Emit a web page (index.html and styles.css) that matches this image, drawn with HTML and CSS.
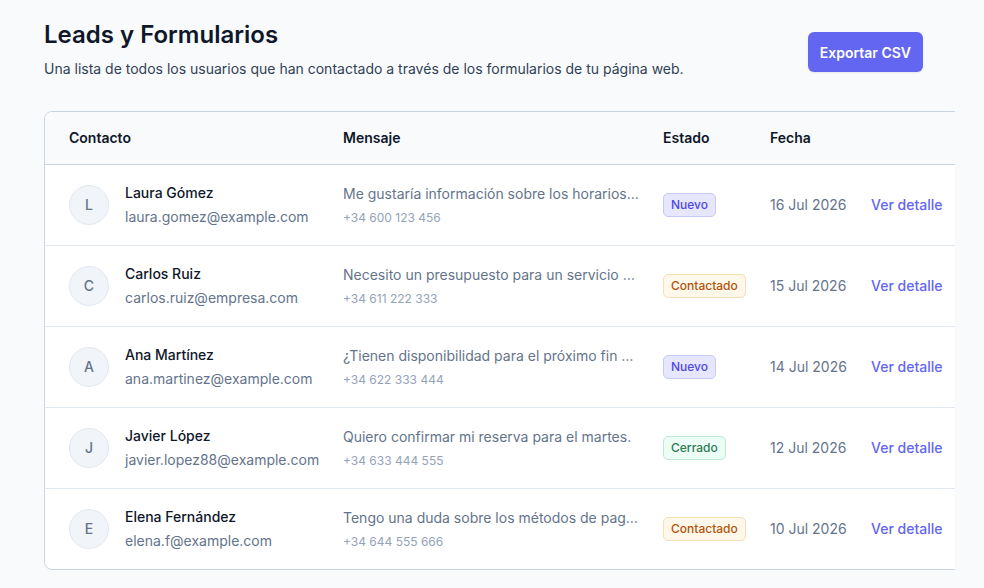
FILE: index.html
```html
<html lang="es">
  <head>
    <meta charset="UTF-8" />
    <meta name="viewport" content="width=device-width, initial-scale=1.0" />
    <title>Leads y Formularios</title>
    <link rel="stylesheet" href="styles.css">
  </head>
  <body>
    <div class="page">
      <div class="page-header">
        <div>
          <h1 class="page-title">Leads y Formularios</h1>
          <p class="page-subtitle">Una lista de todos los usuarios que han contactado a través de los formularios de tu página web.</p>
        </div>
        <button class="btn-primary">Exportar CSV</button>
      </div>

      <div class="table-scroll">
        <div class="table-card">
          <table class="leads-table">
            <colgroup>
              <col class="col-contact">
              <col class="col-message">
              <col class="col-status">
              <col class="col-date">
              <col class="col-action">
            </colgroup>
            <thead>
              <tr>
                <th>Contacto</th>
                <th>Mensaje</th>
                <th>Estado</th>
                <th>Fecha</th>
                <th></th>
              </tr>
            </thead>
            <tbody>
              <tr>
                <td>
                  <div class="contact">
                    <div class="avatar">L</div>
                    <div>
                      <div class="contact-name">Laura Gómez</div>
                      <div class="contact-email">laura.gomez@example.com</div>
                    </div>
                  </div>
                </td>
                <td>
                  <div class="message">Me gustaría información sobre los horarios...</div>
                  <div class="phone">+34 600 123 456</div>
                </td>
                <td><span class="badge badge-new">Nuevo</span></td>
                <td class="date">16 Jul 2026</td>
                <td class="action"><a href="#">Ver detalle</a></td>
              </tr>
              <tr>
                <td>
                  <div class="contact">
                    <div class="avatar">C</div>
                    <div>
                      <div class="contact-name">Carlos Ruiz</div>
                      <div class="contact-email">carlos.ruiz@empresa.com</div>
                    </div>
                  </div>
                </td>
                <td>
                  <div class="message">Necesito un presupuesto para un servicio de mantenimiento</div>
                  <div class="phone">+34 611 222 333</div>
                </td>
                <td><span class="badge badge-contacted">Contactado</span></td>
                <td class="date">15 Jul 2026</td>
                <td class="action"><a href="#">Ver detalle</a></td>
              </tr>
              <tr>
                <td>
                  <div class="contact">
                    <div class="avatar">A</div>
                    <div>
                      <div class="contact-name">Ana Martínez</div>
                      <div class="contact-email">ana.martinez@example.com</div>
                    </div>
                  </div>
                </td>
                <td>
                  <div class="message">¿Tienen disponibilidad para el próximo fin de semana?</div>
                  <div class="phone">+34 622 333 444</div>
                </td>
                <td><span class="badge badge-new">Nuevo</span></td>
                <td class="date">14 Jul 2026</td>
                <td class="action"><a href="#">Ver detalle</a></td>
              </tr>
              <tr>
                <td>
                  <div class="contact">
                    <div class="avatar">J</div>
                    <div>
                      <div class="contact-name">Javier López</div>
                      <div class="contact-email">javier.lopez88@example.com</div>
                    </div>
                  </div>
                </td>
                <td>
                  <div class="message">Quiero confirmar mi reserva para el martes.</div>
                  <div class="phone">+34 633 444 555</div>
                </td>
                <td><span class="badge badge-closed">Cerrado</span></td>
                <td class="date">12 Jul 2026</td>
                <td class="action"><a href="#">Ver detalle</a></td>
              </tr>
              <tr>
                <td>
                  <div class="contact">
                    <div class="avatar">E</div>
                    <div>
                      <div class="contact-name">Elena Fernández</div>
                      <div class="contact-email">elena.f@example.com</div>
                    </div>
                  </div>
                </td>
                <td>
                  <div class="message">Tengo una duda sobre los métodos de pago disponibles</div>
                  <div class="phone">+34 644 555 666</div>
                </td>
                <td><span class="badge badge-contacted">Contactado</span></td>
                <td class="date">10 Jul 2026</td>
                <td class="action"><a href="#">Ver detalle</a></td>
              </tr>
            </tbody>
          </table>
        </div>
      </div>
    </div>
  </body>
</html>
```

FILE: styles.css
```css
* {
  box-sizing: border-box;
}

body {
  margin: 0;
  background-color: #f8fafc;
  font-family: Inter, "Noto Sans", sans-serif;
  color: #0f172a;
}

.page {
  padding: 19px 61px 19px 44px;
}

.page-header {
  display: flex;
  justify-content: space-between;
  align-items: flex-start;
}

.page-title {
  margin: 0;
  font-size: 24px;
  line-height: 32px;
  font-weight: 600;
  color: #0f172a;
}

.page-subtitle {
  margin: 8px 0 0;
  font-size: 14px;
  line-height: 20px;
  color: #334155;
}

.btn-primary {
  margin-top: 13px;
  height: 40px;
  padding: 0 12px;
  border: none;
  border-radius: 6px;
  background-color: #6366f1;
  color: #ffffff;
  font-family: inherit;
  font-size: 14px;
  font-weight: 600;
  box-shadow: 0 1px 2px rgba(0, 0, 0, 0.08);
}

.table-scroll {
  margin-top: 32px;
  margin-right: -32px;
  overflow: hidden;
}

.table-card {
  width: 923px;
  background-color: #ffffff;
  border: 1px solid #cbd5e1;
  border-radius: 8px;
  overflow: hidden;
}

.leads-table {
  width: 921px;
  border-collapse: collapse;
  table-layout: fixed;
  font-size: 14px;
  line-height: 20px;
}

.col-contact { width: 298px; }
.col-message { width: 320px; }
.col-status { width: 107px; }
.col-date { width: 101px; }
.col-action { width: 95px; }

.leads-table thead tr {
  background-color: #f8fafc;
  border-bottom: 1px solid #cbd5e1;
}

.leads-table th,
.leads-table td {
  padding: 0 24px 0 0;
  white-space: nowrap;
}

.leads-table th:first-child,
.leads-table td:first-child {
  padding-left: 24px;
}

.leads-table th {
  height: 52px;
  text-align: left;
  font-weight: 600;
  color: #0f172a;
}

.leads-table td {
  height: 81px;
  vertical-align: middle;
}

.leads-table tbody tr {
  border-bottom: 1px solid #e2e8f0;
}

.leads-table tbody tr:last-of-type {
  border-bottom: none;
}

.contact {
  display: flex;
  align-items: center;
  gap: 16px;
}

.avatar {
  flex: none;
  width: 40px;
  height: 40px;
  border-radius: 50%;
  background-color: #f1f5f9;
  border: 1px solid #e2e8f0;
  display: flex;
  align-items: center;
  justify-content: center;
  color: #64748b;
  font-weight: 500;
}

.contact-name {
  font-weight: 500;
  color: #0f172a;
}

.contact-email {
  margin-top: 4px;
  color: #64748b;
}

.message {
  max-width: 296px;
  overflow: hidden;
  text-overflow: ellipsis;
  color: #64748b;
}

.phone {
  margin-top: 6px;
  font-size: 12px;
  line-height: 16px;
  color: #94a3b8;
}

.badge {
  display: inline-block;
  padding: 4px 7px;
  border: 1px solid;
  border-radius: 5px;
  font-size: 12px;
  line-height: 14px;
  font-weight: 500;
}

.badge-new {
  background-color: #e6e6fe;
  border-color: #c7c9fb;
  color: #4f46e5;
}

.badge-contacted {
  background-color: #fef8eb;
  border-color: #f8dfb1;
  color: #b45309;
}

.badge-closed {
  background-color: #ecfdf5;
  border-color: #bfe9d6;
  color: #2f7a55;
}

.date {
  color: #64748b;
}

.action a {
  color: #6366f1;
  font-weight: 500;
  text-decoration: none;
}
```
